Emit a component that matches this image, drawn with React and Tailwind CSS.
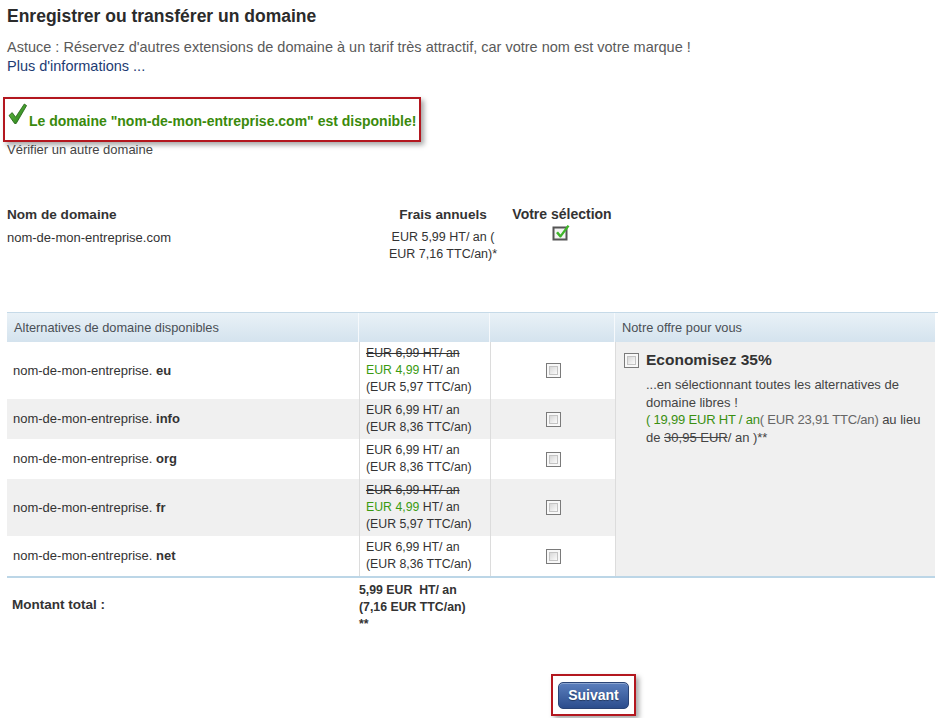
import React from "react";

function BigCheck() {
  return (
    <svg width="19" height="22" viewBox="0 0 19 22" className="shrink-0">
      <defs>
        <linearGradient id="gck" x1="0" y1="0" x2="1" y2="1">
          <stop offset="0" stopColor="#6cc04a" />
          <stop offset="1" stopColor="#1f7a12" />
        </linearGradient>
      </defs>
      <path d="M1 12.5 L4.2 9.6 L7.6 14.2 L16.3 1 L18.6 2.6 L8.2 20.5 L6.6 20.5 Z" fill="url(#gck)" stroke="#1d5e10" strokeWidth="0.8" strokeLinejoin="round" />
    </svg>
  );
}

function CheckedBox() {
  return (
    <svg width="20" height="17" viewBox="0 0 20 17">
      <rect x="1.5" y="3.5" width="13" height="12" fill="#f4f4f4" stroke="#555" strokeWidth="2" />
      <path d="M4 9 L6 7.5 L8.5 10.5 L15.5 1 L17.5 2.3 L9 13.5 L7.8 13.5 Z" fill="#3fb52a" />
    </svg>
  );
}

function Box() {
  return (
    <span className="inline-block w-[15px] h-[15px] border border-[#7a7a7a] p-[2px] bg-[#f8f8f8]">
      <span className="block w-full h-full border border-[#c4c4c4] bg-gradient-to-br from-[#d8d8d8] to-[#fbfbfb]" />
    </span>
  );
}

const rows = [
  { ext: "eu", promo: true, ttc: "5,97", gray: false },
  { ext: "info", promo: false, ttc: "8,36", gray: true },
  { ext: "org", promo: false, ttc: "8,36", gray: false },
  { ext: "fr", promo: true, ttc: "5,97", gray: true },
  { ext: "net", promo: false, ttc: "8,36", gray: false },
];

export default function App() {
  return (
    <div className="w-[945px] min-h-[718px] bg-white px-[7px] text-[#333] font-['Liberation_Sans',Arial,sans-serif]">
      <h1 className="pt-[6px] text-[17.5px] leading-[20px] font-bold text-[#2b2b2b] whitespace-nowrap">
        Enregistrer ou transférer un domaine
      </h1>
      <p className="mt-[12px] text-[14.5px] leading-[19px] text-[#5a5a5a] whitespace-nowrap">
        Astuce : Réservez d'autres extensions de domaine à un tarif très attractif, car votre nom est votre marque !
      </p>
      <p className="text-[14.5px] leading-[19px] text-[#1d3b73]">Plus d'informations ...</p>

      <div className="mt-[21px] ml-[-4px] w-[418px] h-[45px] border-2 border-[#b3171f] shadow-[3px_3px_5px_rgba(0,0,0,0.35)] flex items-start pt-[4px] pl-[3px]">
        <BigCheck />
        <span className="ml-[2px] mt-[10px] text-[14px] leading-[16px] font-bold text-[#3a8a0c] whitespace-nowrap">
          Le domaine "nom-de-mon-entreprise.com" est disponible!
        </span>
      </div>
      <p className="text-[13px] leading-[16px] text-[#444]">Vérifier un autre domaine</p>

      <div className="mt-[48px] grid grid-cols-[373px_126px_112px] text-[13px] leading-[17px]">
        <div className="font-bold text-[13.6px]">Nom de domaine</div>
        <div className="font-bold text-[13.6px] text-center whitespace-nowrap">Frais annuels</div>
        <div className="font-bold text-[14px] text-center whitespace-nowrap">Votre sélection</div>
        <div className="mt-[6px]">nom-de-mon-entreprise.com</div>
        <div className="mt-[6px] text-center text-[12.5px]">
          EUR 5,99 HT/ an (<br />EUR 7,16 TTC/an)*
        </div>
        <div className="mt-[1px] flex justify-center">
          <CheckedBox />
        </div>
      </div>

      <div className="mt-[49px] border-t border-[#c6dae8] grid grid-cols-[352px_131px_125px_320px]">
        <div className="h-[29px] flex items-center pl-[7px] text-[12.8px] text-[#4a4f55] bg-gradient-to-b from-[#e9f1f7] to-[#d4e3ee] border-r border-[#f6f9fc]">
          Alternatives de domaine disponibles
        </div>
        <div className="h-[29px] bg-gradient-to-b from-[#e9f1f7] to-[#d4e3ee] border-r border-[#f6f9fc]" />
        <div className="h-[29px] bg-gradient-to-b from-[#e9f1f7] to-[#d4e3ee] border-r border-[#f6f9fc]" />
        <div className="h-[29px] flex items-center pl-[7px] text-[12.8px] text-[#4a4f55] bg-gradient-to-b from-[#e9f1f7] to-[#d4e3ee]">
          Notre offre pour vous
        </div>

        <div className="col-start-4 row-start-2 row-span-5 bg-[#f0f0f0] border-l border-[#dcdcdc] pt-[10px] pl-[8px]">
          <div className="flex items-center">
            <Box />
            <span className="ml-[7px] text-[15.5px] leading-[16px] font-bold text-[#333]">Economisez 35%</span>
          </div>
          <div className="mt-[8px] ml-[22px] text-[13px] leading-[17.5px] text-[#444] whitespace-nowrap">
            ...en sélectionnant toutes les alternatives de
            <br />
            domaine libres !
            <br />
            <span className="text-[#3a8f10] tracking-[-0.2px]">( 19,99 EUR HT / an</span>
            <span className="text-[#666] tracking-[-0.2px]">( EUR 23,91 TTC/an)</span> au lieu
            <br />
            de <span className="line-through">30,95 EUR</span>/ an )**
          </div>
        </div>

        {rows.map((r) => {
          const bg = r.gray ? "bg-[#f0f0f0]" : "bg-white";
          return (
            <React.Fragment key={r.ext}>
              <div className={`${bg} col-start-1 flex items-center pl-[6px] text-[13px] text-[#333]`}>
                nom-de-mon-entreprise.&nbsp;<span className="font-bold">{r.ext}</span>
              </div>
              <div className={`${bg} col-start-2 border-l border-[#dcdcdc] py-[3px] pl-[6px] text-[12.3px] leading-[17px] text-[#333] whitespace-nowrap`}>
                {r.promo ? (
                  <>
                    <div className="line-through">EUR 6,99 HT/ an</div>
                    <div>
                      <span className="text-[#3a9a10]">EUR 4,99</span> HT/ an
                    </div>
                  </>
                ) : (
                  <div>EUR 6,99 HT/ an</div>
                )}
                <div>(EUR {r.ttc} TTC/an)</div>
              </div>
              <div className={`${bg} col-start-3 border-l border-[#dcdcdc] flex items-center justify-center`}>
                <Box />
              </div>
            </React.Fragment>
          );
        })}
        <div className="col-span-4 h-[2px] bg-[#bcd6e7]" />
        <div className="flex items-center pl-[5px] text-[13.5px] font-bold text-[#333]">Montant total :</div>
        <div className="col-span-3 pt-[4px] text-[12.3px] leading-[17px] font-bold text-[#333]">
          5,99 EUR&nbsp; HT/ an
          <br />
          (7,16 EUR TTC/an)
          <br />
          **
        </div>
      </div>

      <div className="mt-[41px] ml-[544px] w-[85px] h-[42px] border-2 border-[#b3171f] shadow-[3px_3px_5px_rgba(0,0,0,0.35)] pt-[6px] pl-[5px]">
        <button className="w-[71px] h-[27px] rounded-[5px] border border-[#2a4476] bg-gradient-to-b from-[#5b7fbd] to-[#2c4d8d] text-white text-[14px] font-bold [text-shadow:0_1px_1px_rgba(0,0,0,0.4)] shadow-[inset_0_1px_0_rgba(255,255,255,0.3)]">
          Suivant
        </button>
      </div>
    </div>
  );
}
